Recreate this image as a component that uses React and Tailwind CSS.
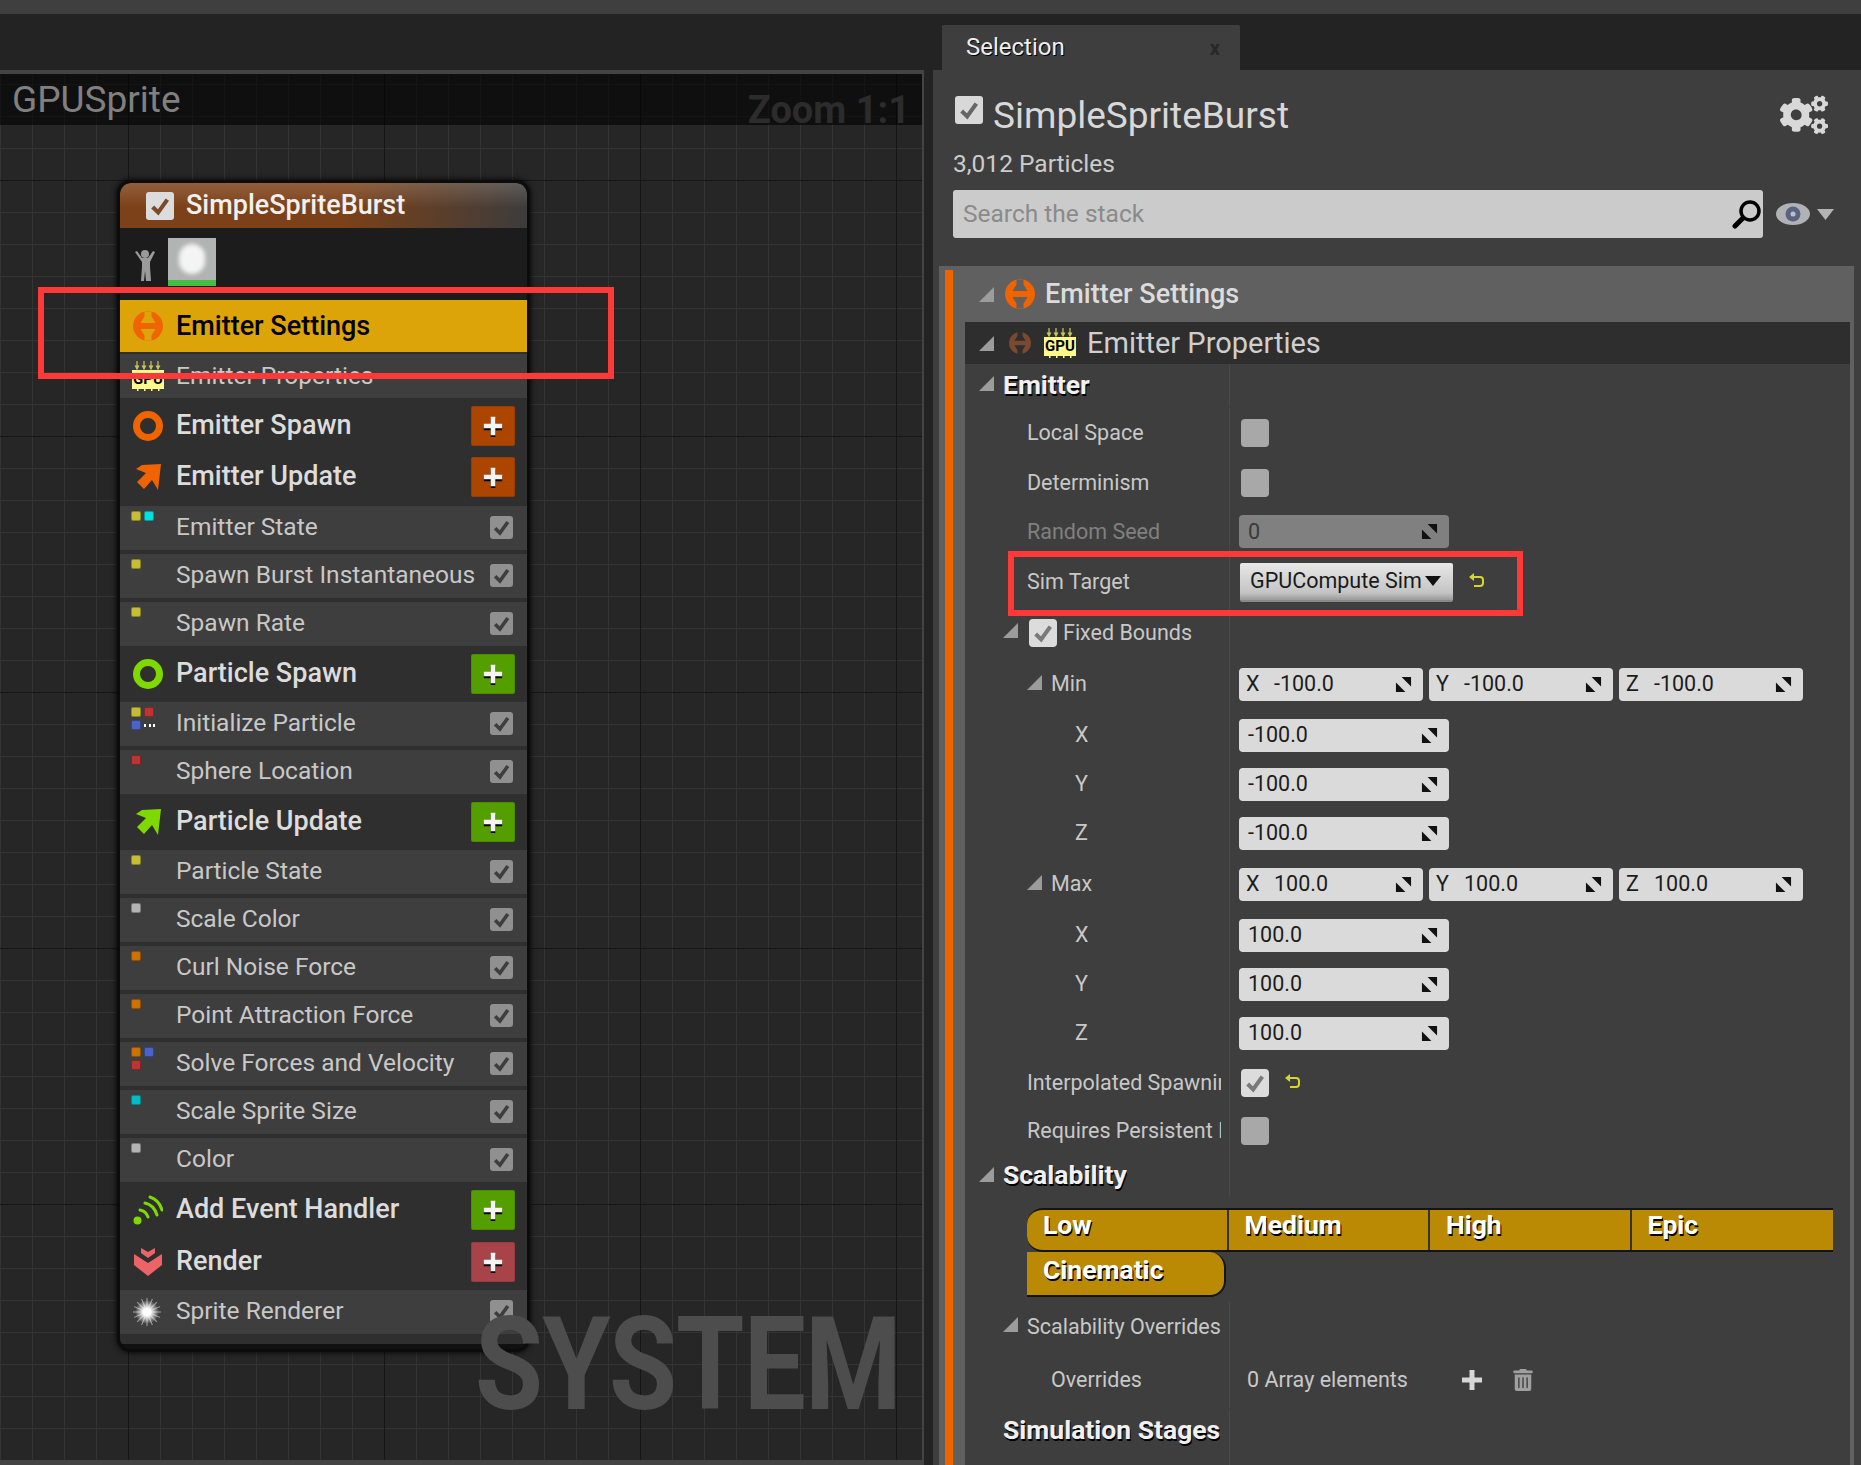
import React from "react";
import { FaCogs, FaTrashAlt } from "react-icons/fa";

const ORANGE = "#f06400";
const GREEN = "#7fd800";

const Tri = ({ className = "" }) => (
  <svg viewBox="0 0 15 15" className={`w-[15px] h-[15px] shrink-0 ${className}`}>
    <polygon points="15,0 15,15 0,15" fill="#9c9c9c" />
  </svg>
);

const Check = ({ color = "#3e3e3e", className = "" }) => (
  <svg viewBox="0 0 24 24" className={className}>
    <path d="M4 13l6 6L20 5" fill="none" stroke={color} strokeWidth="4.5" />
  </svg>
);

const EmitterIcon = ({ color = ORANGE, className = "w-[30px] h-[30px]" }) => (
  <svg viewBox="0 0 30 30" className={`shrink-0 ${className}`}>
    <path
      fillRule="evenodd"
      fill={color}
      d="M15 0a15 15 0 1 0 0.01 0zM11.5 0.5h7v5l4 6.5h-15l4-6.5zM7.5 18h15l-4 6.5v5h-7v-5z"
    />
  </svg>
);

const RingIcon = ({ color }) => (
  <svg viewBox="0 0 30 30" className="w-[30px] h-[30px]">
    <circle cx="15" cy="15" r="11.5" fill="none" stroke={color} strokeWidth="7" />
  </svg>
);

const ArrowIcon = ({ color }) => (
  <svg viewBox="0 0 30 30" className="w-[30px] h-[30px]">
    <polygon points="9,3 28,2 25,28 19,18 11,27 4,20 13,11 3,7" fill={color} />
  </svg>
);

const WifiIcon = () => (
  <svg viewBox="0 0 30 30" className="w-[30px] h-[30px]">
    <circle cx="4.5" cy="25.5" r="4" fill={GREEN} />
    <path d="M7 15q6 1 8 7" fill="none" stroke={GREEN} strokeWidth="3" strokeLinecap="round" />
    <path d="M12 8q9 2 12 12" fill="none" stroke={GREEN} strokeWidth="3" strokeLinecap="round" />
    <path d="M17 2q9 3 12 13" fill="none" stroke={GREEN} strokeWidth="3" strokeLinecap="round" />
  </svg>
);

const RenderIcon = () => (
  <svg viewBox="0 0 30 30" className="w-[30px] h-[30px]">
    <polygon points="8,1 15,5 22,1 22,6 15,11 8,6" fill="#ec6468" />
    <polygon points="1,7 15,16 29,7 29,18 15,29 1,18" fill="#ec6468" />
  </svg>
);

const SparkIcon = () => (
  <svg viewBox="0 0 30 30" className="w-[30px] h-[30px] blur-[0.6px]">
    <defs>
      <radialGradient id="spark">
        <stop offset="0.3" stopColor="#ffffff" />
        <stop offset="1" stopColor="#ffffff" stopOpacity="0" />
      </radialGradient>
    </defs>
    {Array.from({ length: 16 }).map((_, i) => (
      <rect key={i} x="14.5" y="1" width="1" height="28" fill="#a8a8a8" opacity="0.6" transform={`rotate(${i * 22.5} 15 15)`} />
    ))}
    <circle cx="15" cy="15" r="12" fill="url(#spark)" />
  </svg>
);

const GpuIcon = ({ className = "" }) => (
  <div className={`relative w-[32px] h-[30px] shrink-0 ${className}`}>
    <svg viewBox="0 0 32 30" className="absolute inset-0 w-full h-full">
      {[5, 12, 19, 26].map((x) => (
        <path key={x} d={`M${x} 0v5l-1.5 0 1.5 3 1.5-3-1.5 0`} stroke="#c8c860" strokeWidth="1.2" fill="#c8c860" />
      ))}
      <rect x="0" y="9" width="32" height="19" fill="#fff98c" />
      {[5, 12, 19, 26].map((x) => (
        <rect key={x} x={x} y="28" width="1.5" height="2" fill="#fff98c" />
      ))}
    </svg>
    <span className="absolute left-0 right-0 top-[8px] text-center text-[15px] leading-[20px] font-bold text-black">
      GPU
    </span>
  </div>
);

const PlusGlyph = ({ className = "w-[22px] h-[22px]" }) => (
  <svg viewBox="0 0 22 24" className={className}>
    <path d="M8.5 2h5v7.5H21v5h-7.5V22h-5v-7.5H1v-5h7.5z" fill="#000" transform="translate(0 2)" />
    <path d="M8.5 2h5v7.5H21v5h-7.5V22h-5v-7.5H1v-5h7.5z" fill="#f4f4f4" />
  </svg>
);

const AddButton = ({ color }) => (
  <div
    className="w-[44px] h-[40px] rounded-[2px] flex items-center justify-center border border-black/10 shrink-0"
    style={{ backgroundColor: color }}
  >
    <PlusGlyph />
  </div>
);

const StageRow = ({ height, icon, label, button }) => (
  <div className={`flex items-center pl-[13px] pr-[12px] ${height}`}>
    <div className="w-[30px] mr-[13px] shrink-0 flex justify-center">{icon}</div>
    <span className="flex-1 text-[27px] font-medium text-[#dcdcdc] leading-none -mt-[1px]">{label}</span>
    {button && <AddButton color={button} />}
  </div>
);

const Squares = ({ colors }) => (
  <div className="grid grid-cols-[10px_10px] gap-x-[3px] gap-y-[3px] w-[32px] mr-[13px] mt-[5px] shrink-0 self-start">
    {colors.map((c, i) =>
      c === "dots" ? (
        <div key={i} className="flex items-center justify-between h-[10px] w-[11px]">
          <span className="w-[2px] h-[3px] bg-white" />
          <span className="w-[2px] h-[3px] bg-white" />
          <span className="w-[2px] h-[3px] bg-white" />
        </div>
      ) : (
        <span key={i} className="block w-[10px] h-[10px] rounded-[2px] border border-black/30" style={{ backgroundColor: c }} />
      )
    )}
  </div>
);

const ModuleRow = ({ label, colors, icon, className = "mt-[4px]" }) => (
  <div className={`flex items-center h-[44px] bg-[#3e3e3e] pl-[11px] pr-[14px] ${className}`}>
    {icon ? <div className="w-[32px] mr-[13px] shrink-0 flex justify-center">{icon}</div> : <Squares colors={colors} />}
    <span className="flex-1 text-[24.5px] text-[#c8c8c8] whitespace-nowrap leading-none -mt-[2px]">{label}</span>
    <div className="w-[23px] h-[23px] -mt-[2px] rounded-[3px] bg-[#909090] flex items-center justify-center shrink-0">
      <Check className="w-[19px] h-[19px]" />
    </div>
  </div>
);

const Y = "#c6bd36";
const R = "#bb3535";
const B = "#4a63c8";
const G = "#b4b4b4";
const O = "#cc7200";
const C = "#00bcc4";

const Node = () => (
  <div className="absolute left-[117px] top-[106px] w-[413px] h-[1172px] rounded-[14px] bg-[#111111] border-[3px] border-[#0c0c0c] shadow-[0_0_6px_#000] overflow-hidden">
    <div className="h-[45px] flex items-center pl-[26px] rounded-t-[11px] bg-[linear-gradient(180deg,rgba(255,255,255,0.16),rgba(255,255,255,0)_55%),linear-gradient(100deg,#7c4118_0%,#7c4118_55%,#3c3c3c_100%)]">
      <div className="w-[28px] h-[28px] rounded-[3px] bg-[#dcdcdc] flex items-center justify-center">
        <Check color="#7c4a2a" className="w-[22px] h-[22px]" />
      </div>
      <span className="ml-[12px] text-[27px] font-medium text-[#f0f0f0] leading-none">SimpleSpriteBurst</span>
    </div>
    <div className="h-[72px] bg-[#1b1c1b] flex items-start pl-[14px] pt-[10px]">
      <svg viewBox="0 0 22 32" className="w-[22px] h-[32px] mt-[11px] mr-[12px]">
        <circle cx="11" cy="5" r="4" fill="#9a9a9a" />
        <path d="M1 3l2-1 5 7h6l5-7 2 1-5 10v5l1 14h-5l-1-10-1 10H7l1-14v-5z" fill="#9a9a9a" />
      </svg>
      <div className="w-[48px] h-[48px] bg-[#b2b4b4] flex flex-col overflow-hidden">
        <div className="flex-1 flex items-center justify-center">
          <div className="w-[26px] h-[30px] rounded-full bg-[#f4f4f4] blur-[2px]" />
        </div>
        <div className="h-[6px] bg-[#45bd45]" />
      </div>
    </div>
    <div className="bg-[#2f2f2f]">
      <div className="h-[52px] bg-[#dca408] flex items-center pl-[13px]">
        <div className="w-[30px] mr-[13px]">
          <EmitterIcon />
        </div>
        <span className="text-[27px] font-medium text-black leading-none">Emitter Settings</span>
      </div>
      <div className="h-[44px] mt-[2px] bg-[#3e3e3e] flex items-center pl-[12px]">
        <GpuIcon className="mr-[12px]" />
        <span className="text-[24.5px] text-[#c8c8c8] leading-none">Emitter Properties</span>
      </div>
      <StageRow height="h-[56px]" icon={<RingIcon color={ORANGE} />} label="Emitter Spawn" button="#ab4500" />
      <StageRow height="h-[52px] pb-[6px]" icon={<ArrowIcon color={ORANGE} />} label="Emitter Update" button="#ab4500" />
      <ModuleRow className="" label="Emitter State" colors={[Y, "#00e0e0"]} />
      <ModuleRow label="Spawn Burst Instantaneous" colors={[Y]} />
      <ModuleRow label="Spawn Rate" colors={[Y]} />
      <StageRow height="h-[56px]" icon={<RingIcon color={GREEN} />} label="Particle Spawn" button="#559e00" />
      <ModuleRow className="" label="Initialize Particle" colors={[Y, R, B, "dots"]} />
      <ModuleRow label="Sphere Location" colors={[R]} />
      <StageRow height="h-[56px]" icon={<ArrowIcon color={GREEN} />} label="Particle Update" button="#559e00" />
      <ModuleRow className="" label="Particle State" colors={[Y]} />
      <ModuleRow label="Scale Color" colors={[G]} />
      <ModuleRow label="Curl Noise Force" colors={[O]} />
      <ModuleRow label="Point Attraction Force" colors={[O]} />
      <ModuleRow label="Solve Forces and Velocity" colors={[O, B, R]} />
      <ModuleRow label="Scale Sprite Size" colors={[C]} />
      <ModuleRow label="Color" colors={[G]} />
      <StageRow height="h-[56px]" icon={<WifiIcon />} label="Add Event Handler" button="#559e00" />
      <StageRow height="h-[52px] pb-[4px]" icon={<RenderIcon />} label="Render" button="#a84349" />
      <ModuleRow className="" label="Sprite Renderer" icon={<SparkIcon />} />
      <div className="h-[10px]" />
    </div>
  </div>
);

const Spinner = () => (
  <svg viewBox="0 0 18 18" className="w-[17px] h-[17px] shrink-0">
    <polygon points="7,1 17,1 17,11" fill="#111" />
    <polygon points="1,7 1,17 11,17" fill="#111" />
  </svg>
);

const NumBox = ({ axis, value, className = "w-[210px]", disabled }) => (
  <div
    className={`h-[33px] rounded-[4px] flex items-center text-[21.5px] leading-none text-[#1c1c1c] pr-[11px] ${
      axis ? "pl-[7px]" : "pl-[9px]"
    } ${disabled ? "bg-[#808080]" : "bg-[#dadada]"} ${className}`}
  >
    {axis && <span className="w-[28px]">{axis}</span>}
    <span className="flex-1">{value}</span>
    <Spinner />
  </div>
);

const Reset = () => (
  <svg viewBox="0 0 16 16" className="w-[16px] h-[16px] shrink-0 ml-[10px] -mt-[2px]">
    <path d="M2 4h9a3 3 0 0 1 3 3v3a3 3 0 0 1-3 3H5" fill="none" stroke="#d6d62a" strokeWidth="2" />
    <polygon points="5,0 5,8 0,4" fill="#d6d62a" />
  </svg>
);

const EmptyBox = () => <div className="w-[28px] h-[28px] rounded-[4px] bg-[#a8a8a8] ml-[2px]" />;

const Prop = ({ height, pad, left, children, labelClass = "text-[21.5px] text-[#c8c8c8]" }) => (
  <div className={`flex ${height}`}>
    <div className={`w-[265px] shrink-0 flex items-center border-r border-[#4a4a4a] pr-[8px] leading-none ${pad} ${labelClass}`}>
      <div className="flex items-center min-w-0 overflow-hidden whitespace-nowrap py-[4px]">{left}</div>
    </div>
    <div className="flex-1 flex items-center pl-[9px] gap-[6px]">{children}</div>
  </div>
);

const Triple = ({ sign }) => (
  <>
    <NumBox axis="X" value={`${sign}100.0`} className="w-[184px]" />
    <NumBox axis="Y" value={`${sign}100.0`} className="w-[184px]" />
    <NumBox axis="Z" value={`${sign}100.0`} className="w-[184px]" />
  </>
);

const boldShadow = "text-[26.5px] font-bold text-[#f0f0f0] leading-none [text-shadow:1px_2px_0_#000]";

const Detail = () => (
  <div className="flex-1 bg-[#3e3e3e] mr-[4px] overflow-hidden flex flex-col">
    <Prop
      height="h-[42px] mb-[2px]"
      pad="pl-[14px]"
      labelClass={boldShadow}
      left={
        <>
          <Tri className="mr-[9px] -mt-[3px]" />
          Emitter
        </>
      }
    />
    <Prop height="h-[50px]" pad="pl-[62px]" left="Local Space"><EmptyBox /></Prop>
    <Prop height="h-[49px]" pad="pl-[62px]" left="Determinism"><EmptyBox /></Prop>
    <Prop height="h-[49px]" pad="pl-[62px]" left="Random Seed" labelClass="text-[21.5px] text-[#808080]">
      <NumBox value="0" disabled className="w-[210px] text-[#3a3a3a]" />
    </Prop>
    <Prop height="h-[52px]" pad="pl-[62px]" left="Sim Target">
      <div className="w-[213px] h-[39px] ml-[1px] rounded-[2px] bg-[linear-gradient(180deg,#e8e8e8,#c4c4c4_80%,#9a9a9a)] border-b-2 border-[#888] flex items-center pl-[10px] text-[21.5px] text-[#1a1a1a] leading-none">
        GPUCompute Sim
        <svg viewBox="0 0 16 10" className="w-[16px] h-[10px] ml-[3px]">
          <polygon points="0,0 16,0 8,10" fill="#111" />
        </svg>
      </div>
      <Reset />
    </Prop>
    <Prop
      height="h-[50px]"
      pad="pl-[38px]"
      left={
        <>
          <Tri className="mr-[11px] -mt-[6px]" />
          <div className="w-[28px] h-[28px] rounded-[4px] bg-[#dcdcdc] flex items-center justify-center mr-[6px] shrink-0">
            <Check color="#7a7a7a" className="w-[22px] h-[22px]" />
          </div>
          Fixed Bounds
        </>
      }
    />
    <Prop
      height="h-[52px]"
      pad="pl-[62px]"
      left={
        <>
          <Tri className="mr-[9px] -mt-[4px]" />
          Min
        </>
      }
    >
      <Triple sign="-" />
    </Prop>
    <Prop height="h-[50px]" pad="pl-[110px]" left="X"><NumBox value="-100.0" /></Prop>
    <Prop height="h-[48px]" pad="pl-[110px]" left="Y"><NumBox value="-100.0" /></Prop>
    <Prop height="h-[50px]" pad="pl-[110px]" left="Z"><NumBox value="-100.0" /></Prop>
    <Prop
      height="h-[52px]"
      pad="pl-[62px]"
      left={
        <>
          <Tri className="mr-[9px] -mt-[4px]" />
          Max
        </>
      }
    >
      <Triple sign="" />
    </Prop>
    <Prop height="h-[50px]" pad="pl-[110px]" left="X"><NumBox value="100.0" /></Prop>
    <Prop height="h-[48px]" pad="pl-[110px]" left="Y"><NumBox value="100.0" /></Prop>
    <Prop height="h-[50px]" pad="pl-[110px]" left="Z"><NumBox value="100.0" /></Prop>
    <Prop height="h-[49px]" pad="pl-[62px]" left="Interpolated Spawning">
      <div className="w-[28px] h-[28px] rounded-[4px] bg-[#dcdcdc] ml-[2px] flex items-center justify-center">
        <Check color="#7a7a7a" className="w-[22px] h-[22px]" />
      </div>
      <Reset />
    </Prop>
    <Prop height="h-[48px]" pad="pl-[62px]" left="Requires Persistent ID"><EmptyBox /></Prop>
    <Prop
      height="h-[41px] mb-[4px]"
      pad="pl-[14px]"
      labelClass={boldShadow}
      left={
        <>
          <Tri className="mr-[9px] -mt-[3px]" />
          Scalability
        </>
      }
    />
    <div className="pl-[62px] h-[102px] pt-[8px] shrink-0">
      <div className="flex w-[806px] h-[44px] bg-[#ba8a04] border-y-2 border-[#141414] rounded-l-[16px] text-[26.5px] font-bold text-white leading-none [text-shadow:1px_2px_0_#000]">
        {["Low", "Medium", "High", "Epic"].map((t, i) => (
          <div key={t} className={`w-[202px] flex items-center pl-[16px] pb-[10px] ${i < 3 ? "border-r-2 border-[#333333]" : ""}`}>
            {t}
          </div>
        ))}
      </div>
      <div className="w-[199px] h-[45px] bg-[#ba8a04] border-b-2 border-r-2 border-[#141414] rounded-r-[16px] flex items-center pl-[16px] pb-[7px] text-[26.5px] font-bold text-white leading-none [text-shadow:1px_2px_0_#000]">
        Cinematic
      </div>
    </div>
    <Prop
      height="h-[50px]"
      pad="pl-[38px]"
      left={
        <>
          <Tri className="mr-[9px] -mt-[6px]" />
          Scalability Overrides
        </>
      }
    />
    <Prop height="h-[56px] mb-[2px]" pad="pl-[86px]" left="Overrides">
      <span className="text-[21.5px] text-[#c8c8c8] leading-none w-[208px] ml-[8px] shrink-0 whitespace-nowrap">0 Array elements</span>
      <svg viewBox="0 0 22 22" className="w-[22px] h-[22px] shrink-0">
        <path d="M8.5 1h5v7.5H21v5h-7.5V21h-5v-7.5H1v-5h7.5z" fill="#d8d8d8" />
      </svg>
      <FaTrashAlt className="w-[20px] h-[22px] text-[#a0a0a0] ml-[24px] shrink-0" />
    </Prop>
    <Prop height="h-[40px]" pad="pl-[38px]" labelClass={boldShadow} left="Simulation Stages" />
    <Prop height="flex-1" pad="pl-[38px]" />
  </div>
);

export default function App() {
  return (
    <div className="w-[1861px] h-[1465px] overflow-hidden flex flex-col bg-[#232323] font-['Roboto',sans-serif]">
      <div className="h-[14px] bg-[#3f3f3f] shrink-0" />
      <div className="flex-1 flex min-h-0">
        <div className="w-[933px] shrink-0 flex flex-col">
          <div className="h-[56px] shrink-0" />
          <div className="flex-1 relative border-t-4 border-b-[5px] border-r-2 border-[#444444] mr-[9px] bg-[#262626] [background-image:linear-gradient(#161616_1px,transparent_1px),linear-gradient(90deg,#161616_1px,transparent_1px),linear-gradient(#343434_1px,transparent_1px),linear-gradient(90deg,#343434_1px,transparent_1px)] [background-size:256px_256px,256px_256px,32px_32px,32px_32px] [background-position:128px_106px,128px_106px,0_10px,0_10px] overflow-hidden">
            <div className="h-[51px] bg-black/60 flex items-center justify-between pl-[12px] pr-[12px] relative">
              <span className="text-[37px] text-[#808080] leading-none">GPUSprite</span>
              <span className="text-[38px] font-bold text-[#2c2c2c] leading-none mt-[20px]">Zoom 1:1</span>
            </div>
            <Node />
            <div className="absolute left-[475px] top-[1226px] origin-left scale-x-[0.85] text-[130px] font-bold text-[#4d4d4d] leading-[130px] whitespace-nowrap tracking-[-1px]">
              SYSTEM
            </div>
          </div>
        </div>

        <div className="flex-1 flex flex-col min-w-0">
          <div className="h-[56px] shrink-0 pl-[9px] pt-[11px]">
            <div className="w-[298px] h-[45px] rounded-t-[2px] bg-[#3e3e3e] flex items-center justify-between pl-[24px] pr-[20px]">
              <span className="text-[24px] text-[#eeeeee] leading-none -mt-[2px] [text-shadow:1px_1px_0_#000]">Selection</span>
              <span className="text-[20px] font-bold text-[#282828] leading-none">x</span>
            </div>
          </div>
          <div className="flex-1 bg-[#3e3e3e] flex flex-col min-h-0">
            <div className="h-[50px] mt-[20px] flex items-center pl-[22px] pr-[33px] shrink-0">
              <div className="w-[28px] h-[28px] rounded-[3px] bg-[#d8d8d8] flex items-center justify-center -mt-[10px]">
                <Check color="#666666" className="w-[22px] h-[22px]" />
              </div>
              <span className="ml-[10px] flex-1 text-[37px] text-[#d8d8d8] leading-none">SimpleSpriteBurst</span>
              <FaCogs className="w-[48px] h-[44px] text-[#d8d8d8]" />
            </div>
            <div className="h-[48px] pl-[20px] flex items-center text-[24.5px] text-[#cccccc] leading-none shrink-0">3,012 Particles</div>
            <div className="h-[48px] mt-[2px] flex items-center shrink-0">
              <div className="w-[810px] h-[48px] ml-[20px] rounded-[3px] bg-[#cbcbcb] flex items-center pl-[10px] pr-[1px] text-[24.5px] text-[#8a8a8a] leading-none">
                <span className="flex-1">Search the stack</span>
                <svg viewBox="0 0 30 30" className="w-[30px] h-[30px]">
                  <circle cx="18" cy="12" r="9" fill="none" stroke="#000" strokeWidth="3.5" />
                  <path d="M10 20L3 27" stroke="#000" strokeWidth="5" strokeLinecap="round" />
                </svg>
              </div>
              <svg viewBox="0 0 36 24" className="w-[36px] h-[24px] ml-[12px]">
                <ellipse cx="18" cy="12" rx="17" ry="11" fill="#b0b2b6" />
                <circle cx="18" cy="12" r="7.5" fill="#5a6480" />
                <circle cx="18" cy="12" r="2.5" fill="#b8c0d0" />
              </svg>
              <svg viewBox="0 0 17 11" className="w-[17px] h-[11px] ml-[6px]">
                <polygon points="0,0 17,0 8.5,11" fill="#b4b4b4" />
              </svg>
            </div>
            <div className="flex-1 mt-[28px] ml-[6px] mr-[7px] bg-[#606060] flex min-h-0">
              <div className="w-[26px] shrink-0 pl-[6px] pt-[4px]">
                <div className="w-[8px] h-full bg-[#f06400]" />
              </div>
              <div className="flex-1 flex flex-col min-w-0">
                <div className="h-[56px] shrink-0 flex items-center pl-[14px]">
                  <Tri className="mr-[11px]" />
                  <EmitterIcon />
                  <span className="ml-[10px] text-[27px] font-medium text-[#dcdcdc] leading-none">Emitter Settings</span>
                </div>
                <div className="h-[42px] shrink-0 mr-[4px] bg-[#2e2e2e] flex items-center pl-[14px]">
                  <Tri className="mr-[15px]" />
                  <EmitterIcon color="#7a4a30" className="w-[22px] h-[30px] mr-[13px]" />
                  <GpuIcon className="mr-[11px]" />
                  <span className="text-[29px] text-[#cfcfcf] leading-none">Emitter Properties</span>
                </div>
                <Detail />
              </div>
            </div>
          </div>
        </div>
      </div>

      {/* red callouts drawn on top of the screenshot */}
      <div className="absolute left-[38px] top-[287px] w-[576px] h-[92px] border-[6px] border-[#ff3838]" />
      <div className="absolute left-[1008px] top-[551px] w-[515px] h-[65px] border-[6px] border-[#ff3838]" />
    </div>
  );
}
